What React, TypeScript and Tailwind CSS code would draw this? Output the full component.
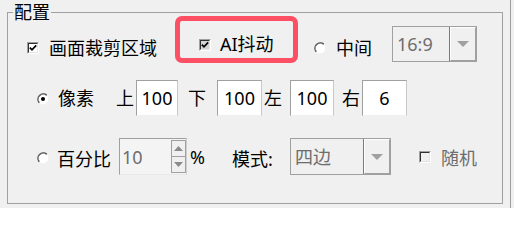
import React from "react";

function CheckBox({ checked, fill }: { checked?: boolean; fill: string }) {
  return (
    <div className="w-[12px] h-[12px] border border-t-[#a0a0a0] border-l-[#a0a0a0] border-r-white border-b-white shrink-0">
      <div
        className={`w-full h-full border border-t-[#303030] border-l-[#303030] border-r-[#e3e3e3] border-b-[#e3e3e3] flex items-center justify-center ${fill}`}
      >
        {checked && (
          <svg width="8" height="8" viewBox="0 0 8 8">
            <path d="M0.8 3.6 L3 5.8 L7.2 1.4" stroke="#000" strokeWidth="1.7" fill="none" />
          </svg>
        )}
      </div>
    </div>
  );
}

function Radio({ checked }: { checked?: boolean }) {
  return (
    <svg width="12" height="12" viewBox="0 0 12 12" className="shrink-0">
      <circle cx="6" cy="6" r="5.4" fill="#fff" />
      <path d="M2.2 9.8 A5.4 5.4 0 0 1 9.8 2.2" stroke="#404040" strokeWidth="1.4" fill="none" />
      <path d="M2.6 9.4 A4.8 4.8 0 0 1 9.4 2.6" stroke="#a0a0a0" strokeWidth="0.6" fill="none" />
      {checked && <circle cx="6" cy="6" r="2" fill="#000" />}
    </svg>
  );
}

function Arrow({ down }: { down?: boolean }) {
  return (
    <svg width="12" height="6" viewBox="0 0 12 6">
      {down ? <path d="M0 0 H12 L6 6 Z" fill="#a0a0a0" /> : <path d="M0 6 H12 L6 0 Z" fill="#a0a0a0" />}
    </svg>
  );
}

function Combo({ text, w, h }: { text: string; w: string; h: string }) {
  return (
    <div className={`${w} ${h} border border-[#a0a0a0] bg-[#f0f0f0] flex shrink-0`}>
      <div className="flex-1 pl-[4px] flex items-center text-[#6d6d6d] leading-[24px]">{text}</div>
      <div className="w-[27px] h-full border-l border-[#7a7a7a] flex">
        <div className="flex-1 border border-t-white border-l-white border-r-[#a0a0a0] border-b-[#a0a0a0] bg-[#f0f0f0] flex items-center justify-center">
          <Arrow down />
        </div>
      </div>
    </div>
  );
}

function Edit({ value, w }: { value: string; w: string }) {
  return (
    <div
      className={`${w} h-[36px] bg-white border border-t-[#a0a0a0] border-l-[#a0a0a0] border-r-[#c8c8c8] border-b-[#f0f0f0] text-center leading-[34px] shrink-0`}
    >
      {value}
    </div>
  );
}

function Spin() {
  return (
    <div className="w-[68px] h-[37px] border border-t-[#a0a0a0] border-l-[#a0a0a0] border-r-[#d0d0d0] border-b-[#e8e8e8] bg-[#f4f4f4] flex shrink-0">
      <div className="flex-1 pl-[2px] flex items-center text-[#6d6d6d] leading-[24px]">10</div>
      <div className="w-[15px] flex flex-col py-[1px]">
        <div className="flex-1 border border-[#a0a0a0] bg-[#f0f0f0] flex items-center justify-center">
          <svg width="9" height="5" viewBox="0 0 9 5">
            <path d="M0 5 H9 L4.5 0 Z" fill="#8a8a8a" />
          </svg>
        </div>
        <div className="flex-1 border border-t-0 border-[#a0a0a0] bg-[#f0f0f0] flex items-center justify-center">
          <svg width="9" height="5" viewBox="0 0 9 5">
            <path d="M0 0 H9 L4.5 5 Z" fill="#8a8a8a" />
          </svg>
        </div>
      </div>
    </div>
  );
}

export default function App() {
  return (
    <div className="w-[514px] h-[208px] bg-[#f0f0f0] font-['Noto_Sans','Noto_Sans_CJK_SC',sans-serif] text-[18px] text-black flex overflow-hidden">
      <div className="w-[511px] h-full border-r border-[#a0a0a0] pl-[7px]">
        <fieldset className="w-[496px] border border-[#a0a0a0] pb-[28px]">
          <legend className="ml-[5px] px-[1px] h-[24px] leading-[24px]">配置</legend>

          <div className="flex items-start h-[40px]">
            <div className="ml-[19px] mt-[18px]">
              <CheckBox checked fill="bg-white" />
            </div>
            <span className="ml-[10px] mt-[12px] leading-[24px] whitespace-nowrap">画面裁剪区域</span>
            <div className="relative flex items-start ml-[42px]">
              <div className="absolute left-[-24px] top-[-8px] w-[123px] h-[47px] border-[5px] border-[#fd5065] rounded-[7px]" />
              <div className="mt-[15px]">
                <CheckBox checked fill="bg-[#d4d4d4]" />
              </div>
              <span className="ml-[9px] mt-[8px] w-[54px] leading-[24px] whitespace-nowrap">AI抖动</span>
            </div>
            <div className="ml-[40px] mt-[18px] flex">
              <Radio />
            </div>
            <span className="ml-[10px] mt-[12px] leading-[24px] whitespace-nowrap">中间</span>
            <div className="ml-[20px] mt-[2px]">
              <Combo text="16:9" w="w-[85px]" h="h-[36px]" />
            </div>
          </div>

          <div className="flex items-start h-[36px] mt-[16px]">
            <div className="ml-[29px] mt-[13px] flex">
              <Radio checked />
            </div>
            <span className="ml-[9px] mt-[6px] leading-[24px] whitespace-nowrap">像素</span>
            <span className="ml-[22px] mt-[6px] leading-[24px]">上</span>
            <div className="ml-[2px]">
              <Edit value="100" w="w-[42px]" />
            </div>
            <span className="ml-[10px] mt-[6px] leading-[24px]">下</span>
            <div className="ml-[11px]">
              <Edit value="100" w="w-[45px]" />
            </div>
            <span className="ml-[2px] mt-[6px] leading-[24px]">左</span>
            <div className="ml-[8px]">
              <Edit value="100" w="w-[44px]" />
            </div>
            <span className="ml-[8px] mt-[6px] leading-[24px]">右</span>
            <div className="ml-[2px]">
              <Edit value="6" w="w-[45px]" />
            </div>
          </div>

          <div className="flex items-start h-[37px] mt-[22px]">
            <div className="ml-[29px] mt-[14px] flex">
              <Radio />
            </div>
            <span className="ml-[8px] mt-[9px] leading-[24px] whitespace-nowrap">百分比</span>
            <div className="ml-[8px]">
              <Spin />
            </div>
            <span className="ml-[3px] mt-[7px] leading-[24px]">%</span>
            <span className="ml-[27px] mt-[9px] w-[58px] leading-[24px] whitespace-nowrap">模式:</span>
            <Combo text="四边" w="w-[101px]" h="h-[37px]" />
            <div className="ml-[28px] mt-[13px]">
              <CheckBox fill="bg-[#f0f0f0]" />
            </div>
            <span className="ml-[10px] mt-[8px] leading-[24px] text-[#6d6d6d] whitespace-nowrap">随机</span>
          </div>
        </fieldset>
      </div>
    </div>
  );
}
